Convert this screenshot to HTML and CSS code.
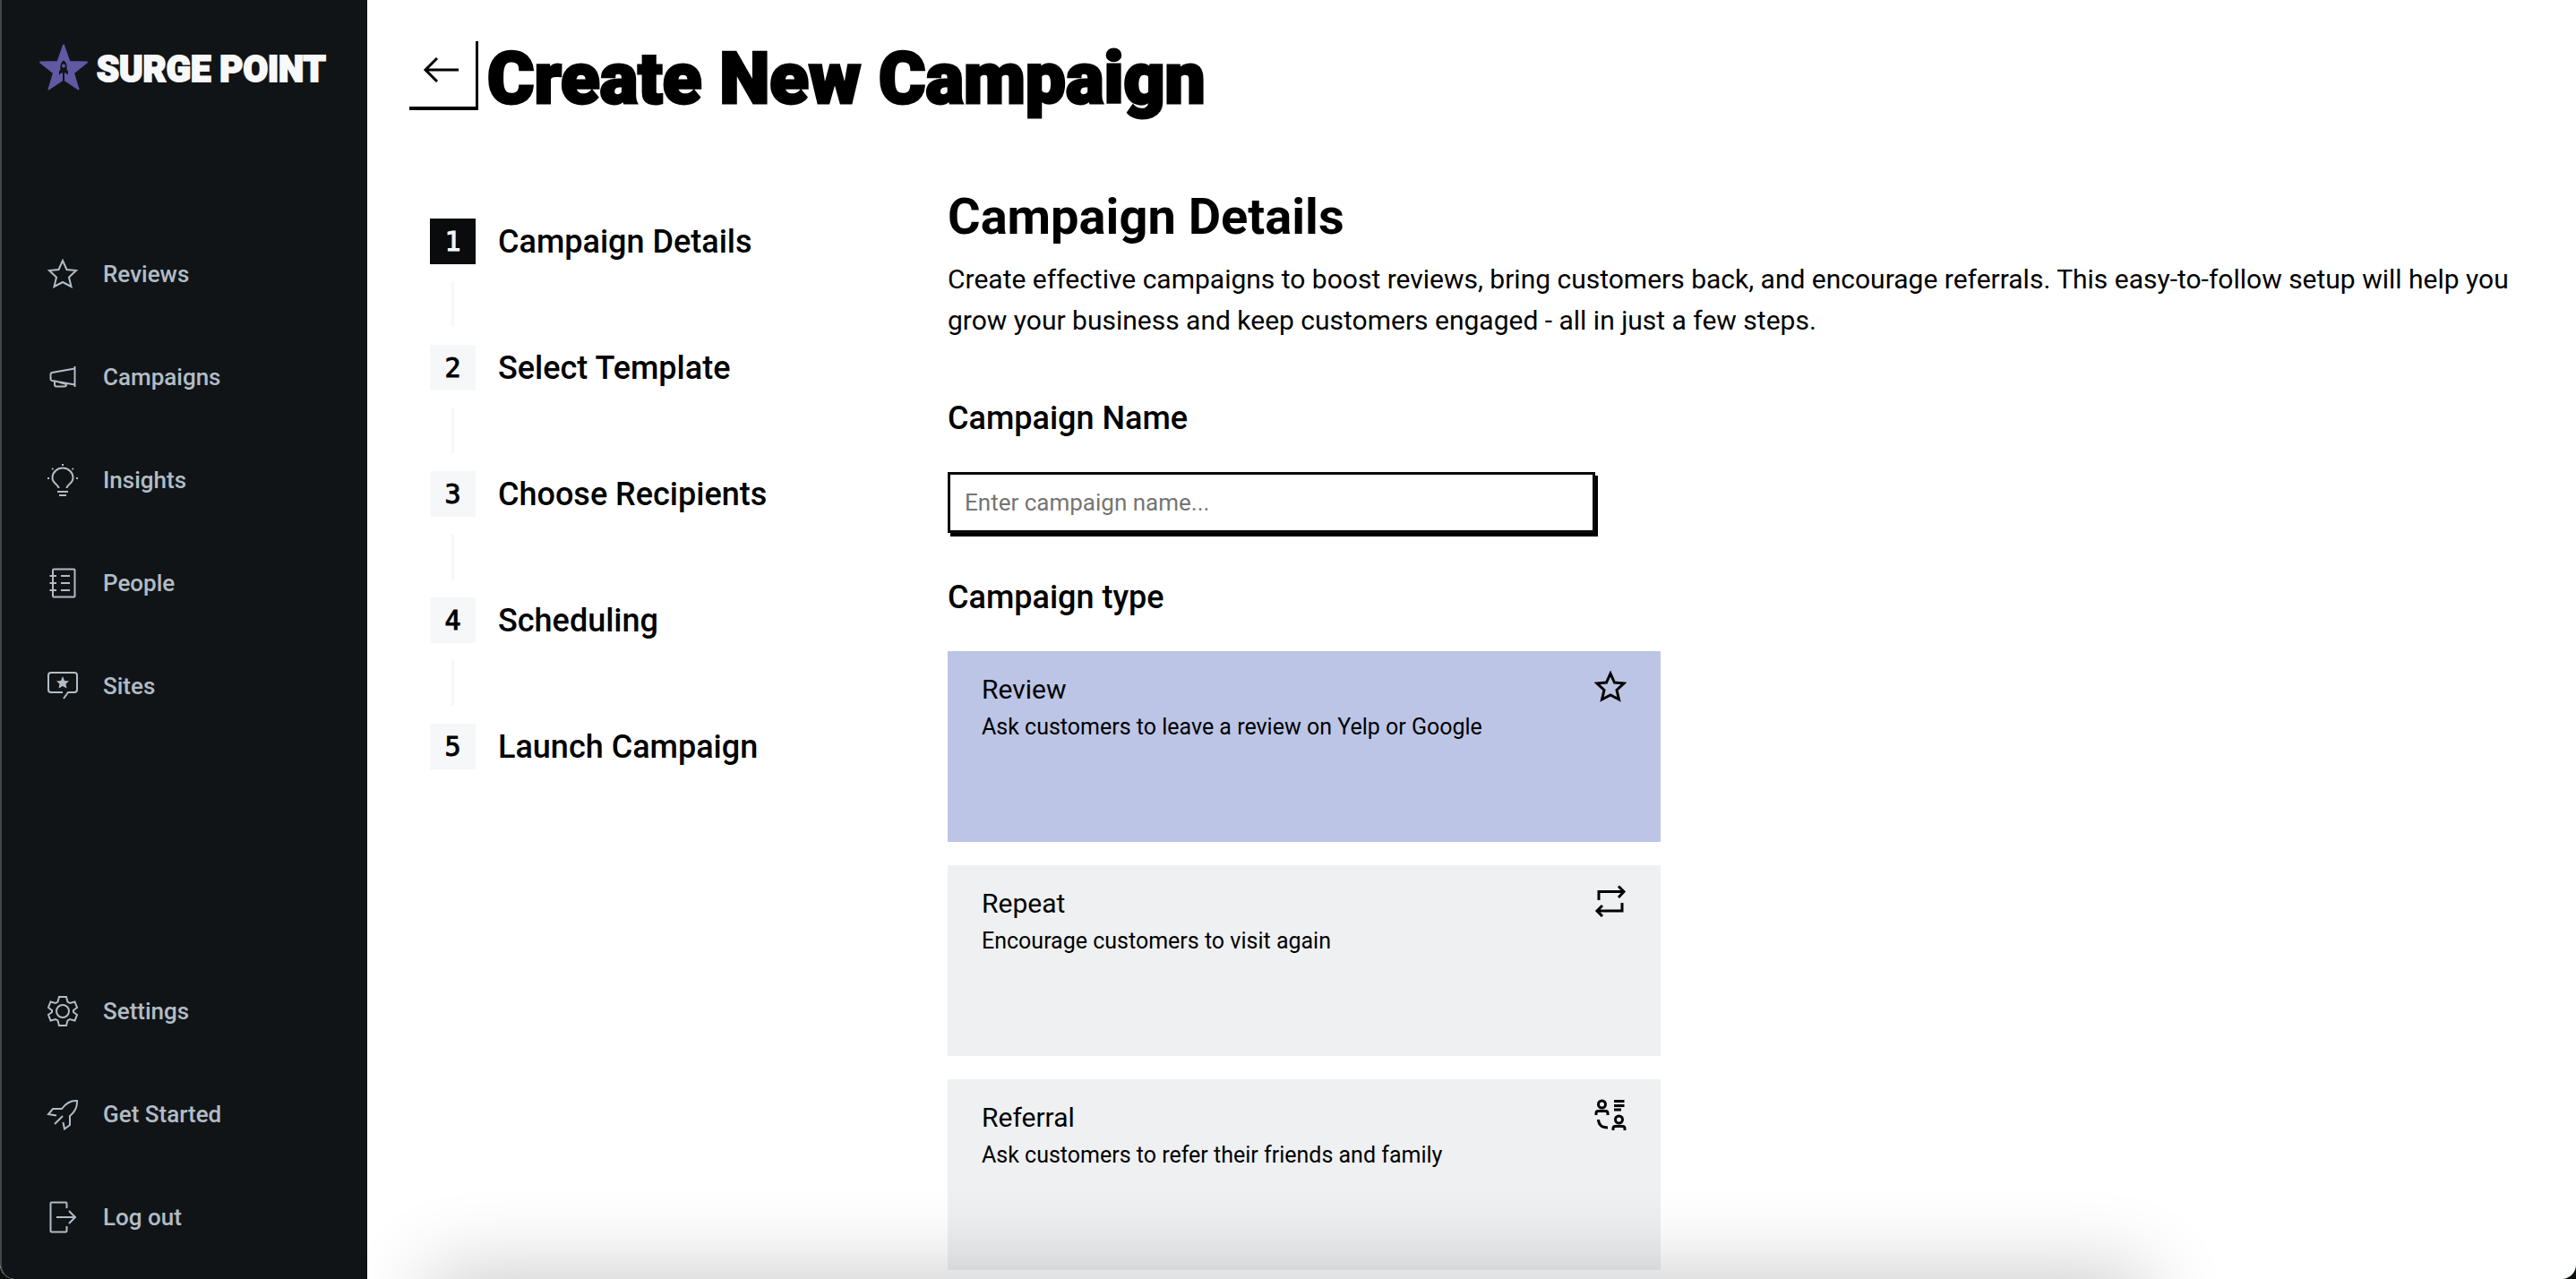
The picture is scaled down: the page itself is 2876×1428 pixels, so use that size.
FILE: index.html
```
<!DOCTYPE html>
<html lang="en">
<head>
    <meta charset="UTF-8">
    <meta name="viewport" content="width=device-width, initial-scale=1.0">
    <title>Create New Campaign - Surge Point</title>
    <link rel="stylesheet" href="styles.css">
</head>
<body>

    <!-- Sidebar -->
    <aside class="sidebar">
        <a class="logo" href="#">
            <svg class="logo-star" viewBox="0 0 54 51">
                <path fill="#5f5aa2" stroke="#5f5aa2" stroke-width="2" stroke-linejoin="round" d="M27 1 L33.500 19.500 L53 20 L38 32 L43.500 50 L27 39 L10.500 50 L16 32 L1 20 L20.500 19.500 Z"/>
                <path fill="#111416" d="M27 18 C30 20 31 23 30.500 28 L32 30 V34 L29.500 32 H28 V41 L26 44 V32 H24.500 L22 34 V30 L23.500 28 C23 23 24 20 27 18 Z"/>
                <circle cx="27" cy="24" r="2" fill="#5f5aa2"/>
            </svg>
            <span>SURGE POINT</span>
        </a>

        <nav class="nav">
            <a href="#"><svg viewBox="0 0 36 36"><path d="M18 3 L22.500 13 L33 14 L25 21.500 L27.500 32 L18 27 L8.500 32 L11 21.500 L3 14 L13.500 13 Z"/></svg>Reviews</a>
            <a href="#"><svg viewBox="0 0 36 36"><path d="M31.500 6 V29 M31.500 8.500 L6 13 Q4.500 13.500 4.500 15 V20 Q4.500 21.500 6 22 L31.500 26.500 M9 22.500 V26 Q9 28.500 11 28.500 H20 Q22 28.500 22 26 V24.500 M10 22.500 L22 26"/></svg>Campaigns</a>
            <a href="#"><svg viewBox="0 0 36 36"><path d="M13.500 27 C13.500 23 6.500 22 6.500 15.500 A11.500 11 0 0 1 29.500 15.500 C29.500 22 22.500 23 22.500 27 M12 31 H24 M14 35 H22 M17 1 H19 M6 5 L7.500 6 M30 5 L28.500 6 M1 16 H3 M33 16 H35"/></svg>Insights</a>
            <a href="#"><svg viewBox="0 0 36 36"><rect x="7" y="2.500" width="24.500" height="31" rx="1"/><path d="M3.500 10 H11 M3.500 18 H11 M3.500 26 H11 M16 10 H26 M16 18 H26 M16 26 H26"/></svg>People</a>
            <a href="#"><svg viewBox="0 0 36 36"><path d="M18 25 H5 Q2 25 2 22 V6 Q2 3 5 3 H31 Q34 3 34 6 V22 Q34 25 31 25 H24 L19 32"/><path class="fill" d="M18 7 L20 12 L25 12.500 L21.500 15.500 L22.500 20.500 L18 18 L13.500 20.500 L14.500 15.500 L11 12.500 L16 12 Z"/></svg>Sites</a>
        </nav>

        <nav class="nav nav-bottom">
            <a href="#"><svg viewBox="0 0 36 36"><path d="M14 2 H22 L23.500 7.500 L26 9 L31.500 7.500 L34 14 L30 17 V19 L34 22 L31.500 28.500 L26 27 L23.500 28.500 L22 34 H14 L12.500 28.500 L10 27 L4.500 28.500 L2 22 L6 19 V17 L2 14 L4.500 7.500 L10 9 L12.500 7.500 Z"/><circle cx="18" cy="18" r="7"/></svg>Settings</a>
            <a href="#"><svg viewBox="0 0 36 36"><path d="M11 19.500 L2 18 L7 12 H17 C22 5 27 2.500 34 3 C34.500 10 32 15 26 20 V30 L20 34.500 L18.500 27 M18 20 L9 29"/></svg>Get Started</a>
            <a href="#"><svg viewBox="0 0 36 36"><path d="M22.500 8 V2.500 Q22.500 1.500 21.500 1.500 H5.500 Q4.500 1.500 4.500 2.500 V33.500 Q4.500 34.500 5.500 34.500 H21.500 Q22.500 34.500 22.500 33.500 V28 M11 18 H32 M25 11 L32 18 L25 25"/></svg>Log out</a>
        </nav>
    </aside>

    <!-- Main Section -->
    <main class="main">
        <header class="page-header">
            <button class="back" type="button" aria-label="Back">
                <svg viewBox="0 0 42 30"><path d="M40 15 H3 M16 2 L3 15 L16 28"/></svg>
            </button>
            <h1>Create New Campaign</h1>
        </header>

        <div class="content">
            <ol class="steps">
                <li class="active"><span class="num">1</span>Campaign Details</li>
                <li><span class="num">2</span>Select Template</li>
                <li><span class="num">3</span>Choose Recipients</li>
                <li><span class="num">4</span>Scheduling</li>
                <li><span class="num">5</span>Launch Campaign</li>
            </ol>

            <form class="details">
                <h2>Campaign Details</h2>
                <p class="intro">Create effective campaigns to boost reviews, bring customers back, and encourage referrals. This easy-to-follow setup will help you grow your business and keep customers engaged - all in just a few steps.</p>

                <label class="field-title" for="campaignName">Campaign Name</label>
                <input class="name-input" type="text" id="campaignName" placeholder="Enter campaign name...">

                <h3 class="field-title">Campaign type</h3>
                <div class="types">
                    <button class="type selected" type="button">
                        <span class="type-text">
                            <span class="type-name">Review</span>
                            <span class="type-info">Ask customers to leave a review on Yelp or Google</span>
                        </span>
                        <svg viewBox="0 0 36 36"><path d="M18 3 L22.500 13 L33 14 L25 21.500 L27.500 32 L18 27 L8.500 32 L11 21.500 L3 14 L13.500 13 Z"/></svg>
                    </button>
                    <button class="type" type="button">
                        <span class="type-text">
                            <span class="type-name">Repeat</span>
                            <span class="type-info">Encourage customers to visit again</span>
                        </span>
                        <svg viewBox="0 0 36 36"><path d="M5 17 V7.500 H33 M27 1.500 L33 7.500 L27 14 M31 20 V29 H3 M9 23 L3 29 L9 35"/></svg>
                    </button>
                    <button class="type" type="button">
                        <span class="type-text">
                            <span class="type-name">Referral</span>
                            <span class="type-info">Ask customers to refer their friends and family</span>
                        </span>
                        <svg viewBox="0 0 36 36"><circle cx="8.500" cy="6" r="4"/><circle cx="27.500" cy="23" r="4"/><path d="M2 18 V16 Q2 13.500 4.500 13.500 H12.500 Q15 13.500 15 16 V18 M21 35 V33 Q21 30.500 23.500 30.500 H31.500 Q34 30.500 34 33 V35 M22 2.500 H33.500 M22 7.500 H33.500 M22 12 H30 M4.500 23 Q5 32 15 32"/></svg>
                    </button>
                </div>
            </form>
        </div>
    </main>

    <div class="bottom-shade"></div>

</body>
</html>
```
FILE: styles.css
```
* {
    box-sizing: border-box;
}

html {
    background-color: #0b100c;
}

body {
    font-family: Roboto, "Liberation Sans", sans-serif;
    margin: 0;
    height: 100vh;
    display: flex;
    overflow: hidden;
    background-color: #fff;
    border-radius: 0 0 16px 16px;
    color: #000;
}

svg {
    fill: none;
    stroke: currentColor;
    stroke-width: 2;
    flex-shrink: 0;
}

svg .fill {
    fill: currentColor;
    stroke: none;
}

/* Sidebar */
.sidebar {
    width: 410px;
    flex-shrink: 0;
    display: flex;
    flex-direction: column;
    padding: 49px 40px 12px 42px;
    background-color: #111416;
    border-left: 2px solid #444648;
    border-bottom-left-radius: 16px;
}

.logo {
    display: flex;
    align-items: center;
    gap: 10px;
    color: #f7f8fa;
    font-size: 40px;
    line-height: 46px;
    font-weight: 900;
    text-decoration: none;
    white-space: nowrap;
    -webkit-text-stroke: 2px #f7f8fa;
}

.logo span {
    padding-top: 6px;
}

.logo-star {
    width: 54px;
    height: 52px;
    stroke: none;
}

.nav {
    display: flex;
    flex-direction: column;
    margin-top: 147px;
}

.nav-bottom {
    margin-top: auto;
}

.nav a {
    display: flex;
    align-items: center;
    gap: 27px;
    height: 115px;
    padding-left: 8px;
    color: #b1bcc6;
    font-size: 26px;
    font-weight: 500;
    text-decoration: none;
}

.nav svg {
    width: 36px;
    height: 36px;
}

/* Header */
.main {
    flex: 1;
    padding: 46px 46px 0 47px;
}

.page-header {
    display: flex;
    gap: 10px;
}

.back {
    width: 77px;
    height: 77px;
    padding: 0 2px 6px 0;
    background: none;
    border: solid #000;
    border-width: 0 3px 4px 0;
    cursor: pointer;
}

.back svg {
    width: 42px;
    height: 30px;
    stroke-width: 3;
}

h1 {
    margin: 0;
    font-size: 80px;
    line-height: 84px;
    font-weight: 900;
    -webkit-text-stroke: 3px #000;
}

/* Steps */
.content {
    display: flex;
    margin-top: 79px;
}

.steps {
    width: 601px;
    flex-shrink: 0;
    display: flex;
    flex-direction: column;
    gap: 90px;
    margin: 0;
    padding: 35px 0 0 23px;
    list-style: none;
}

.steps li {
    position: relative;
    display: flex;
    align-items: center;
    gap: 25px;
    height: 51px;
    font-size: 36px;
    font-weight: 500;
}

.steps li + li::before {
    content: "";
    position: absolute;
    left: 24px;
    bottom: 71px;
    width: 3px;
    height: 51px;
    background-color: #f6f7f9;
}

.num {
    width: 51px;
    background-color: #f6f7f9;
    font-family: "DejaVu Sans Mono", monospace;
    font-size: 30px;
    line-height: 51px;
    font-weight: 400;
    text-align: center;
    -webkit-text-stroke: 1px currentColor;
}

.active .num {
    background-color: #090b0d;
    color: #f6f7f9;
}

/* Form */
.details {
    flex: 1;
}

h2 {
    margin: 0;
    font-size: 56px;
    line-height: 66px;
    font-weight: 700;
}

.intro {
    margin: 14px 0 0;
    font-size: 30px;
    line-height: 46px;
}

.field-title {
    display: block;
    margin: 64px 0 38px;
    font-size: 36px;
    line-height: 44px;
    font-weight: 500;
}

.name-input {
    display: block;
    width: 723px;
    height: 68px;
    padding: 0 16px;
    border: 3px solid #090b0d;
    box-shadow: 3px 4px 0 #000;
    font-family: inherit;
    font-size: 26px;
}

.name-input::placeholder {
    color: #757575;
}

.name-input + .field-title {
    margin-top: 50px;
}

.types {
    display: flex;
    flex-direction: column;
    gap: 26px;
    width: 796px;
}

.type {
    display: flex;
    justify-content: space-between;
    align-items: flex-start;
    height: 213px;
    padding: 22px 38px;
    background-color: #eff0f2;
    border: none;
    color: #000;
    font-family: inherit;
    text-align: left;
    cursor: pointer;
}

.type.selected {
    background-color: #bcc5e5;
}

.type svg {
    width: 36px;
    height: 36px;
    stroke-width: 3;
}

.type-text {
    display: flex;
    flex-direction: column;
}

.type-name {
    font-size: 30px;
    line-height: 42px;
}

.type-info {
    font-size: 25px;
    line-height: 42px;
}

/* Soft shade along the bottom edge */
.bottom-shade {
    position: fixed;
    left: 17%;
    right: 17%;
    top: 100%;
    height: 100px;
    box-shadow: 0 0 90px 10px rgba(0, 0, 0, 0.2);
}
```
